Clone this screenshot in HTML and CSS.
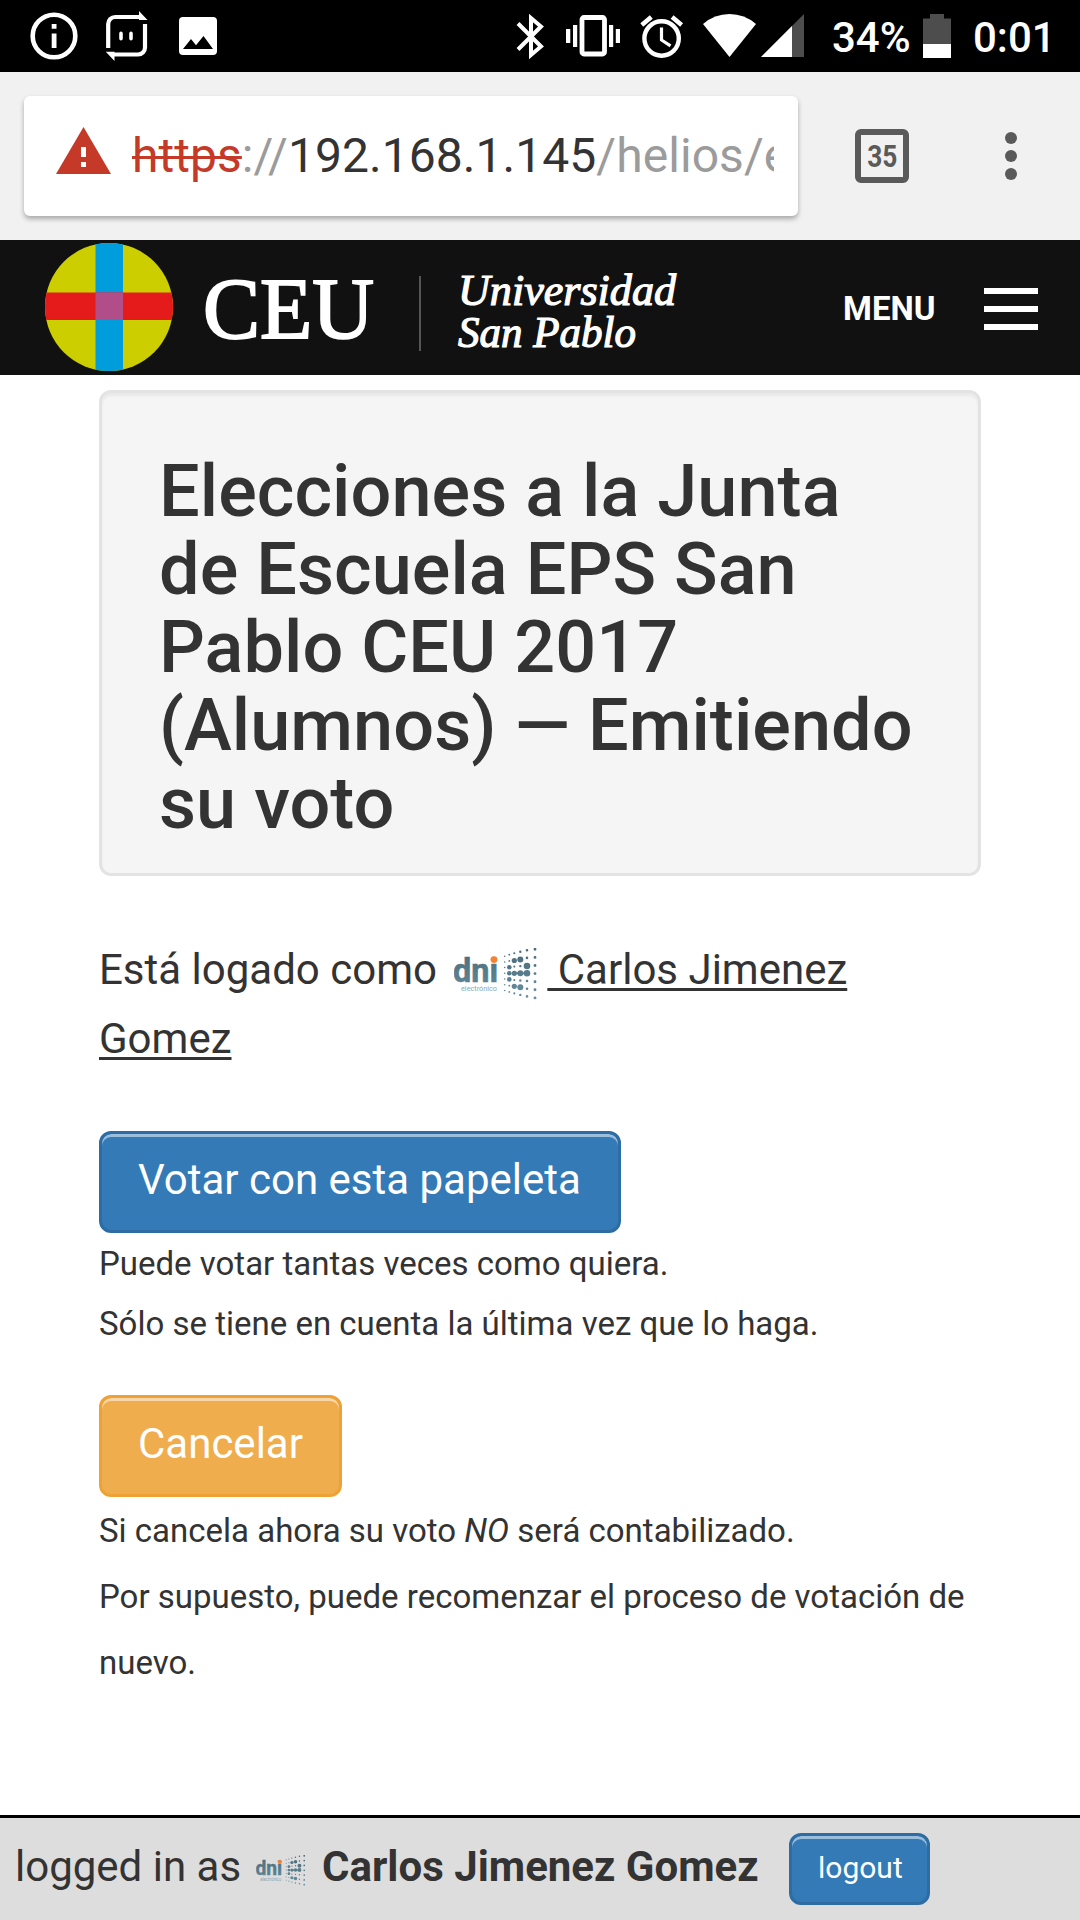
FILE: index.html
```html
<!DOCTYPE html>
<html lang="es">
<head>
<meta charset="utf-8">
<title>Elecciones a la Junta de Escuela</title>
<link rel="stylesheet" href="styles.css">
</head>
<body>
<div class="status">
  <svg class="status-left" viewBox="0 0 240 72">
    <circle cx="54" cy="36" r="21.3" fill="none" stroke="#fff" stroke-width="4.6"/>
    <path d="M51.7 24h4.8v4.8h-4.8zM51.7 33.5h4.8V48h-4.8z" fill="#fff"/>
    <path d="M108.2 48V24a7 7 0 0 1 7-7h26M145 24v23.500a7 7 0 0 1-7 7h-26" fill="none" stroke="#fff" stroke-width="4.200"/>
    <path d="M139 11l8.500 8.900H139zM114.500 61l-8.700-9.200h8.700zM119.200 33.500q0-2 1.800-2t1.800 2v5q0 2-1.800 2t-1.800-2zM129.200 33.500q0-2 1.800-2t1.800 2v5q0 2-1.800 2t-1.800-2z" fill="#fff"/>
    <rect x="179" y="17" width="38" height="38" rx="4" fill="#fff"/>
    <path d="M183 49l8-10 5 6.300 7.500-9.300 9.500 13z" fill="#000"/>
  </svg>
  <svg class="status-right" viewBox="510 0 300 72">
    <path d="M518 23.500L541 46.500 531 55V18l10 8.500-23 23" fill="none" stroke="#fff" stroke-width="4"/>
    <rect x="582" y="17.500" width="22.500" height="36.500" rx="2" fill="none" stroke="#fff" stroke-width="4.800"/>
    <path d="M566 29h4.300v14H566zM573 25h4.200v22H573zM609 25h4.200v22H609zM615.800 29h4.200v14h-4.200z" fill="#fff"/>
    <circle cx="661.600" cy="38.500" r="17.200" fill="none" stroke="#fff" stroke-width="4.400"/>
    <path d="M661.500 27.500V40l9 5.800" fill="none" stroke="#fff" stroke-width="3.200"/>
    <path d="M641.800 25l9.500-8M681.600 25l-9.500-8" stroke="#fff" stroke-width="4.500"/>
    <path d="M729.500 57L703 24q11.500-10 26.500-10T756 24z" fill="#fff"/>
    <path d="M804 14v43h-43z" fill="#4d4d4d"/>
    <path d="M792 26v31h-31z" fill="#fff"/>
  </svg>
  <span class="percent">34%</span>
  <svg class="battery" viewBox="0 0 28 44"><path d="M0 4.500h7V0h14v4.500h7V30H0z" fill="#4d4d4d"/><path d="M0 30h28v14H0z" fill="#fff"/></svg>
  <span class="clock">0:01</span>
</div>

<div class="toolbar">
  <div class="omnibox">
    <svg class="warning" viewBox="0 0 55 47"><path d="M27.500 0L55 47H0z" fill="#c53929"/><path d="M25 20h5v10h-5zM25 35h5v5h-5z" fill="#fff"/></svg>
    <div class="url"><span class="scheme">https</span>://<span class="host">192.168.1.145</span>/helios/e</div>
  </div>
  <div class="tabs"><span class="tab-count">35</span></div>
  <svg class="dots" viewBox="0 0 12 48"><g fill="#5a5a5a"><circle cx="6" cy="6" r="6"/><circle cx="6" cy="24" r="6"/><circle cx="6" cy="42" r="6"/></g></svg>
</div>

<header class="nav">
  <svg class="brand" viewBox="0 240 700 135">
    <clipPath id="disc"><circle cx="109" cy="307" r="64"/></clipPath>
    <g clip-path="url(#disc)">
      <path d="M45 243h128v128H45z" fill="#cdce00"/>
      <path d="M95.500 243H123v128H95.500z" fill="#009ddc"/>
      <path d="M45 292.500h128V320H45z" fill="#e51a1b"/>
      <path d="M95.500 292.500H123V320H95.500z" fill="#b14d88"/>
    </g>
    <g font-family="'Liberation Serif', serif" fill="#fff" stroke="#fff">
      <text x="203" y="338" font-size="86" textLength="171" lengthAdjust="spacingAndGlyphs" stroke-width="2">CEU</text>
      <g font-style="italic" font-size="44" stroke-width="1.2">
        <text x="458" y="305" textLength="218" lengthAdjust="spacingAndGlyphs">Universidad</text>
        <text x="458" y="347" textLength="178" lengthAdjust="spacingAndGlyphs">San Pablo</text>
      </g>
    </g>
    <path d="M420 276v75" stroke="#555" stroke-width="2"/>
  </svg>
  <span class="menu-label">MENU</span>
  <div class="burger"><i></i><i></i><i></i></div>
</header>

<main class="content">
  <div class="well"><h1 class="title">Elecciones a la Junta de Escuela EPS San Pablo CEU 2017 (Alumnos) — Emitiendo su voto</h1></div>
  <p class="logged">Está logado como <svg class="dni" viewBox="0 0 84 52">
    <linearGradient id="teal" gradientUnits="userSpaceOnUse" x1="0" y1="0" x2="0" y2="50">
      <stop offset="0" stop-color="#4a6878"/><stop offset="1" stop-color="#6490a0"/>
    </linearGradient>
    <g id="dni">
      <text x="-1" y="34" font-family="Roboto, sans-serif" font-weight="700" font-size="33" textLength="45" lengthAdjust="spacingAndGlyphs" fill="url(#teal)" stroke="url(#teal)" stroke-width=".6">dni</text>
      <circle cx="40" cy="11.600" r="3.400" fill="#f58233"/>
      <text x="7" y="43" font-family="Roboto, sans-serif" font-size="8" textLength="36" lengthAdjust="spacingAndGlyphs" fill="#8ba6b2">electrónico</text>
      <g fill="none" stroke="url(#teal)" stroke-linecap="round">
        <path d="M50.700 8.200l.01 34.400" stroke-width="1.500" stroke-dasharray="0 5.700"/>
        <path d="M55.300 6.700l.01 37.400" stroke-width="1.800" stroke-dasharray="0 6.200"/>
        <path d="M60.300 5.200l.01 40.400" stroke-width="2.100" stroke-dasharray="0 6.700"/>
        <path d="M66.300 3.700l.01 43.400" stroke-width="2.400" stroke-dasharray="0 7.200"/>
        <path d="M73 2.200l.01 46.400" stroke-width="2.600" stroke-dasharray="0 7.700"/>
        <path d="M81 1.300l.01 48.800" stroke-width="2.900" stroke-dasharray="0 8.100"/>
        <path d="M60.300 25.300L73 25.310" stroke-width="2"/>
      </g>
      <g fill="url(#teal)">
        <circle cx="60.300" cy="12.500" r="2.600"/><circle cx="66.300" cy="11.400" r="3"/>
        <circle cx="73" cy="18" r="3.300"/><circle cx="55.300" cy="19.300" r="2.300"/>
        <circle cx="55.300" cy="25.300" r="2.300"/><circle cx="60.300" cy="25.300" r="2.600"/>
        <circle cx="66.300" cy="25.300" r="3"/><circle cx="73" cy="25.300" r="3.300"/>
        <circle cx="55.300" cy="31.400" r="2.300"/><circle cx="60.300" cy="38.300" r="2.600"/>
        <circle cx="66.300" cy="39.300" r="3"/>
      </g>
    </g></svg><u>&nbsp;Carlos Jimenez Gomez</u></p>
  <a class="btn primary vote">Votar con esta papeleta</a>
  <p class="note">Puede votar tantas veces como quiera.<br>Sólo se tiene en cuenta la última vez que lo haga.</p>
  <a class="btn warning-btn">Cancelar</a>
  <p class="note loose">Si cancela ahora su voto <em>NO</em> será contabilizado.<br>Por supuesto, puede recomenzar el proceso de votación de nuevo.</p>
</main>

<footer class="footer">
  <span class="foot-text">logged in as</span>
  <svg class="dni-small" viewBox="0 0 84 52"><use href="#dni"/></svg>
  <strong class="foot-name">Carlos Jimenez Gomez</strong>
  <a class="btn primary small">logout</a>
</footer>
</body>
</html>
```
FILE: styles.css
```css
* { box-sizing: border-box; }
body {
  margin: 0;
  width: 1080px;
  height: 1920px;
  display: flex;
  flex-direction: column;
  overflow: hidden;
  background: #fff;
  color: #333;
  font-family: Roboto, sans-serif;
}
svg { display: block; flex: none; }
p, h1 { margin: 0; }

.status { height: 72px; flex: none; display: flex; background: #000; color: #fff; font-size: 42px; font-weight: 500; line-height: 75px; white-space: nowrap; }
.status-left { width: 240px; height: 72px; }
.status-right { width: 300px; height: 72px; margin-left: 270px; }
.percent { width: 91px; margin-left: 22px; }
.battery { width: 28px; height: 44px; margin-top: 14px; }
.clock { margin-left: 22px; }

.toolbar { height: 168px; flex: none; display: flex; align-items: center; padding-left: 24px; background: #f1f1f1; }
.omnibox { width: 774px; height: 120px; display: flex; align-items: center; padding: 0 24px 0 32px; background: #fff; border-radius: 6px; box-shadow: 0 3px 5px rgba(0, 0, 0, .3); }
.warning { width: 55px; height: 47px; margin-top: -11px; }
.url { flex: 1; min-width: 0; margin-left: 21px; overflow: hidden; white-space: nowrap; font-size: 48px; line-height: 120px; letter-spacing: .05px; color: #9b9b9b; }
.scheme { color: #c53929; text-decoration: line-through; text-decoration-thickness: 3px; }
.host { color: #333; }
.tabs { width: 54px; height: 60px; height: 54px; margin-left: 57px; display: flex; align-items: center; justify-content: center; border: 6px solid #5a5a5a; border-radius: 6px; }
.tab-count { font-size: 32px; font-weight: 700; line-height: 42px; color: #5a5a5a; transform: scaleX(.82); }
.dots { width: 12px; height: 48px; margin-left: 96px; }

.nav { height: 135px; flex: none; display: flex; align-items: center; background: #111; color: #fff; }
.brand { width: 700px; height: 135px; }
.menu-label { width: 96px; margin: 3px 0 0 143px; font-size: 33px; font-weight: 700; line-height: 40px; }
.burger { width: 54px; height: 42px; margin: 3px 0 0 45px; display: flex; flex-direction: column; justify-content: space-between; }
.burger i { height: 6px; background: #fff; }

.content { flex: 1; padding: 15px 99px 0; }
.well { height: 486px; padding: 60px 54px 0 57px; background: #f5f5f5; border: 3px solid #e3e3e3; border-radius: 12px; box-shadow: inset 0 3px 3px rgba(0, 0, 0, .05); }
.title { font-size: 72px; font-weight: 500; line-height: 78px; letter-spacing: .06px; }
.logged { height: 138px; margin: 59px 0 58px; font-size: 42px; line-height: 69px; }
.logged u { text-decoration-thickness: 3px; text-underline-offset: 4px; }
.dni { display: inline-block; width: 84px; height: 52px; margin: -20px 9px -20px 7px; vertical-align: 4px; }
.btn { display: block; width: max-content; height: 102px; padding: 0 36px; border: 3px solid; border-radius: 12px; font-size: 42px; line-height: 91px; color: #fff; box-shadow: inset 0 3px 0 rgba(255, 255, 255, .5); }
.primary { background: #337ab7; border-color: #2e6da4; }
.vote { width: 522px; }
.warning-btn { background: #f0ad4e; border-color: #eea236; }
.note { height: 120px; margin: 1px 0 41px; font-size: 33px; line-height: 60px; }
.loose { height: 198px; margin-bottom: 0; line-height: 66px; }

.footer { height: 105px; flex: none; display: flex; align-items: flex-start; padding-left: 15px; border-top: 3px solid #000; background: #ddd; font-size: 42px; line-height: 97px; white-space: nowrap; }
.foot-text { width: 241px; }
.dni-small { width: 50px; height: 31px; margin-top: 37px; }
.foot-name { width: 467px; margin-left: 16px; }
.small { width: 141px; height: 72px; margin-top: 15px; padding: 0 26px; font-size: 30px; line-height: 64px; }
```
